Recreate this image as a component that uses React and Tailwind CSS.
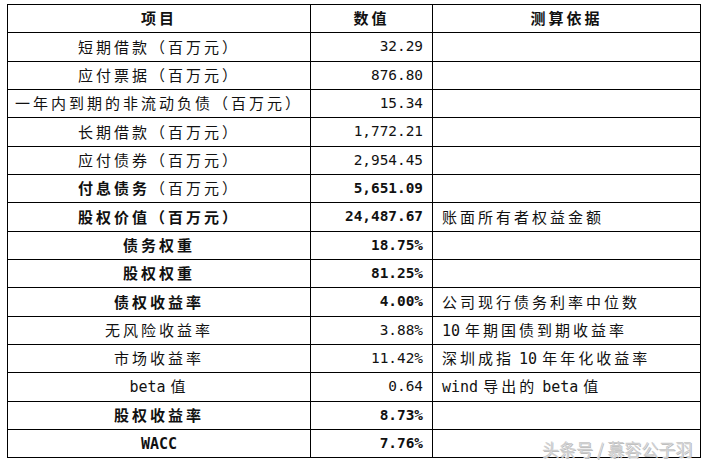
const cjk = { fontFamily: '"Noto Sans CJK SC", "Noto Sans", sans-serif' };

const rows = [
  { h: "h-[28px]", item: [["项目", true]], value: "数值", note: "测算依据", bold: true, header: true },
  { h: "h-[29px]", item: [["短期借款（百万元）"]], value: "32.29" },
  { h: "h-[28px]", item: [["应付票据（百万元）"]], value: "876.80" },
  { h: "h-[28px]", item: [["一年内到期的非流动负债（百万元）"]], value: "15.34" },
  { h: "h-[29px]", item: [["长期借款（百万元）"]], value: "1,772.21" },
  { h: "h-[28px]", item: [["应付债券（百万元）"]], value: "2,954.45" },
  { h: "h-[28px]", item: [["付息债务", true], ["（百万元）"]], value: "5,651.09", bold: true },
  { h: "h-[29px]", item: [["股权价值（百万元）", true]], value: "24,487.67", bold: true, note: "账面所有者权益金额" },
  { h: "h-[28px]", item: [["债务权重", true]], value: "18.75%", bold: true },
  { h: "h-[28px]", item: [["股权权重", true]], value: "81.25%", bold: true },
  { h: "h-[29px]", item: [["债权收益率", true]], value: "4.00%", bold: true, note: "公司现行债务利率中位数" },
  { h: "h-[28px]", item: [["无风险收益率"]], value: "3.88%", note: "10 年期国债到期收益率" },
  { h: "h-[28px]", item: [["市场收益率"]], value: "11.42%", note: "深圳成指 10 年年化收益率" },
  { h: "h-[29px]", item: [["beta 值"]], value: "0.64", note: "wind 导出的 beta 值" },
  { h: "h-[28px]", item: [["股权收益率", true]], value: "8.73%", bold: true },
  { h: "h-[28px]", item: [["WACC", true]], value: "7.76%", bold: true },
];

// latin runs use the half-width mono face, chinese runs get the wide spacing
function Txt({ text, bold }) {
  const parts = text.split(/([\x00-\x7F]+)/).filter(Boolean);
  return parts.map((p, i) =>
    /^[\x00-\x7F]+$/.test(p) ? (
      <span
        key={i}
        className={`tracking-normal [word-spacing:-4px] ${bold ? "font-bold" : "font-normal"}`}
        style={{ fontFamily: '"DejaVu Sans Mono", monospace' }}
      >
        {p}
      </span>
    ) : (
      <span key={i} className={`tracking-[3px] ${bold ? "font-bold" : "font-normal"}`}>
        {p}
      </span>
    )
  );
}

export default function App() {
  return (
    <div className="w-[707px] h-[462px] bg-white relative text-[#111]" style={cjk}>
      <div className="pt-[4px] pl-[7px]">
        <div className="w-[694px] border-l border-t border-black">
          {rows.map((r, i) => (
            <div key={i} className={`grid grid-cols-[303px_122px_268px] ${r.h}`}>
              <div className="flex items-center justify-center border-r border-b border-black text-[15px]">
                <span className="whitespace-pre">
                  {r.item.map(([t, b], j) => (
                    <Txt key={j} text={t} bold={b} />
                  ))}
                </span>
              </div>
              <div
                className={`flex items-center border-r border-b border-black text-[15px] whitespace-nowrap ${
                  r.header ? "justify-center" : "justify-end pr-[9px]"
                }`}
              >
                {r.header ? (
                  <span>
                    <Txt text={r.value} bold />
                  </span>
                ) : (
                  <span className={r.bold ? "font-bold" : "font-normal"} style={{ fontFamily: '"DejaVu Sans Mono", monospace', fontSize: "14.4px" }}>
                    {r.value}
                  </span>
                )}
              </div>
              <div
                className={`flex items-center border-r border-b border-black text-[15px] ${
                  r.header ? "justify-center" : "justify-start pl-[9px]"
                }`}
              >
                {r.note && (
                  <span className="whitespace-pre">
                    <Txt text={r.note} bold={r.header} />
                  </span>
                )}
              </div>
            </div>
          ))}
        </div>
      </div>
      <div className="absolute left-[542px] top-[436px] text-[17px] text-[#cdcdcd] whitespace-nowrap [text-shadow:0_0_1px_#fff,1px_1px_0_#b8b8b8]">
        头条号 / 慕容公子羽
      </div>
    </div>
  );
}
